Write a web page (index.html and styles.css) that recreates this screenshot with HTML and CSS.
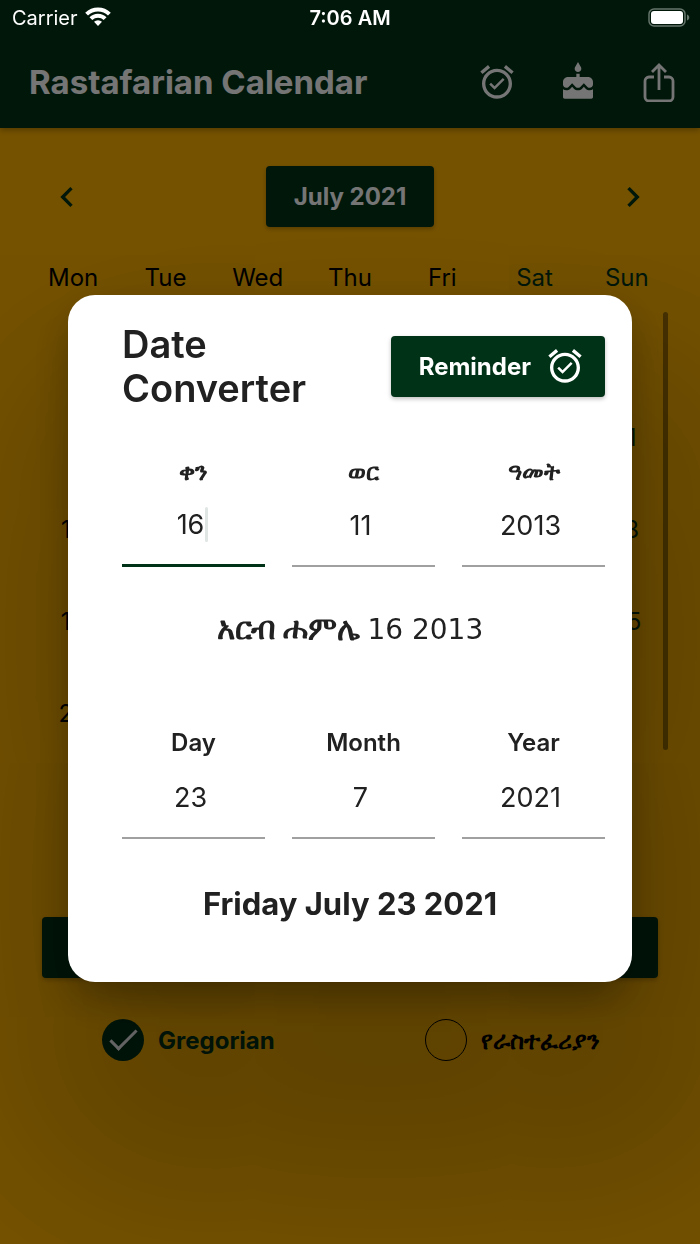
FILE: index.html
```html
<!DOCTYPE html>
<html lang="en">
<head>
<meta charset="utf-8">
<meta name="viewport" content="width=device-width, initial-scale=1">
<title>Rastafarian Calendar</title>
<link rel="stylesheet" href="styles.css">
</head>
<body>
<svg class="defs" aria-hidden="true">
  <symbol id="alarm" viewBox="0 0 24 24"><path fill="currentColor" d="M22 5.72l-4.6-3.86-1.29 1.53 4.6 3.86L22 5.72zM7.88 3.39L6.6 1.86 2 5.71l1.29 1.53 4.59-3.85zM12 4c-4.97 0-9 4.03-9 9s4.02 9 9 9c4.97 0 9-4.03 9-9s-4.03-9-9-9zm0 16c-3.87 0-7-3.13-7-7s3.13-7 7-7 7 3.13 7 7-3.13 7-7 7zm-1.46-5.47L8.41 12.4l-1.06 1.06 3.18 3.18 6-6-1.06-1.06-4.93 4.95z"/></symbol>
</svg>

<div class="status">
  <div class="carrier"><span>Carrier</span>
    <svg class="wifi" viewBox="0 0 26 19" fill="none" stroke="#fff" stroke-width="4"><path d="M1.600 7.200a16.200 16.200 0 0 1 22.800 0M5.900 11.600a10 10 0 0 1 14.200 0"/><path fill="#fff" stroke="none" d="M13 19l-4-4.200a5.700 5.700 0 0 1 8 0z"/></svg>
  </div>
  <div class="clock">7:06 AM</div>
  <svg class="battery" viewBox="0 0 42 20"><rect x="1" y="1" width="36" height="17" rx="5" fill="none" stroke="#66756c" stroke-width="1.500"/><rect x="3" y="3" width="32" height="13" rx="3" fill="#fff"/><path d="M39 6.500c3 1 3 5 0 6z" fill="#66756c"/></svg>
</div>

<div class="app">
  <header class="bar">
    <h1>Rastafarian Calendar</h1>
    <button class="icon" aria-label="Reminders"><svg width="40" height="40"><use href="#alarm"/></svg></button>
    <button class="icon" aria-label="Birthdays"><svg width="40" height="40" viewBox="0 0 24 24" fill="currentColor"><path d="M12 6c1.110 0 2-.9 2-2 0-.38-.1-.73-.29-1.030L12 0l-1.710 2.970c-.19.3-.29.650-.29 1.030 0 1.100.9 2 2 2zm4.600 9.990l-1.070-1.070-1.080 1.070c-1.300 1.300-3.580 1.310-4.890 0l-1.070-1.070-1.090 1.070C6.750 16.640 5.880 17 4.960 17c-.73 0-1.400-.23-1.960-.61V21c0 .55.450 1 1 1h16c.55 0 1-.450 1-1v-4.610c-.56.38-1.230.61-1.960.61-.92 0-1.790-.36-2.440-1.010zM18 9h-5V7h-2v2H6c-1.660 0-3 1.340-3 3v1.540c0 1.080.88 1.960 1.960 1.960.52 0 1.020-.2 1.380-.57l2.140-2.130 2.130 2.130c.74.740 2.030.740 2.770 0l2.140-2.130 2.130 2.130c.37.370.860.570 1.380.570 1.080 0 1.960-.88 1.960-1.960V12C21 10.340 19.660 9 18 9z"/></svg></button>
    <button class="icon" aria-label="Share"><svg width="40" height="40" viewBox="0 -1 40 40" fill="none" stroke="currentColor" stroke-width="2.800"><path d="M15 14H10a4 4 0 0 0-4 4v16a4 4 0 0 0 4 4h20a4 4 0 0 0 4-4V18a4 4 0 0 0-4-4h-5M20 27V3M13 9l7-7 7 7"/></svg></button>
  </header>

  <main class="calendar">
    <div class="nav">
      <button class="arrow" aria-label="Previous month"><svg width="40" height="40" viewBox="0 0 24 24" fill="currentColor"><path d="M15.410 7.410L14 6l-6 6 6 6 1.410-1.410L10.830 12z"/></svg></button>
      <button class="btn">July 2021</button>
      <button class="arrow" aria-label="Next month"><svg width="40" height="40" viewBox="0 0 24 24" fill="currentColor"><path d="M10 6L8.590 7.410 13.170 12l-4.580 4.590L10 18l6-6z"/></svg></button>
    </div>
    <div class="month">
      <table>
        <thead><tr><th>Mon</th><th>Tue</th><th>Wed</th><th>Thu</th><th>Fri</th><th class="end">Sat</th><th class="end">Sun</th></tr></thead>
        <tbody>
          <tr><td></td><td></td><td></td><td></td><td></td><td></td><td></td></tr>
          <tr><td></td><td></td><td></td><td></td><td></td><td></td><td class="end">11</td></tr>
          <tr><td>12</td><td></td><td></td><td></td><td></td><td></td><td class="end">18</td></tr>
          <tr><td>19</td><td></td><td></td><td></td><td></td><td></td><td class="end">25</td></tr>
          <tr><td>26</td><td></td><td></td><td></td><td></td><td></td><td></td></tr>
        </tbody>
      </table>
      <div class="thumb"></div>
    </div>
    <button class="btn wide" aria-label="Open date converter"></button>
    <div class="modes">
      <label class="mode chosen"><input type="radio" name="mode" checked>Gregorian</label>
      <label class="mode" lang="am"><input type="radio" name="mode">የራስተፈሪያን</label>
    </div>
  </main>
</div>

<div class="scrim">
  <section class="dialog" role="dialog" aria-labelledby="dialog-title">
    <div class="head">
      <h2 id="dialog-title">Date Converter</h2>
      <button class="btn">Reminder<svg width="40" height="40"><use href="#alarm"/></svg></button>
    </div>
    <div class="fields">
      <label class="field am active" lang="am"><span>ቀን</span><input value="16" inputmode="numeric"><i class="caret"></i></label>
      <label class="field am" lang="am"><span>ወር</span><input value="11" inputmode="numeric"></label>
      <label class="field am" lang="am"><span>ዓመት</span><input value="2013" inputmode="numeric"></label>
    </div>
    <p class="result am" lang="am">አርብ ሐምሌ <span class="digits">16 2013</span></p>
    <div class="fields">
      <label class="field"><span>Day</span><input value="23" inputmode="numeric"></label>
      <label class="field"><span>Month</span><input value="7" inputmode="numeric"></label>
      <label class="field"><span>Year</span><input value="2021" inputmode="numeric"></label>
    </div>
    <p class="result">Friday July 23 2021</p>
  </section>
</div>
</body>
</html>
```
FILE: styles.css
```css
* { box-sizing: border-box; }
:root { --green: #003217; --ink: #212121; }
body {
  margin: 0;
  min-height: 100vh;
  background: #ffb300;
  color: #000;
  font-family: Inter, "Noto Sans", sans-serif;
  font-size: 24px;
}
button, input { font: inherit; color: inherit; border: 0; background: none; padding: 0; margin: 0; }
h1, h2, p { margin: 0; }
.defs { position: absolute; width: 0; height: 0; }

.status {
  position: fixed;
  inset: 0 0 auto 0;
  z-index: 3;
  display: grid;
  grid-template-columns: 1fr auto 1fr;
  align-items: center;
  height: 36px;
  padding: 0 10px;
  color: #fff;
  font-size: 20px;
}
.carrier { display: flex; align-items: center; gap: 7px; padding-left: 2px; }
.wifi { width: 26px; height: 19px; margin-bottom: 3px; }
.clock { font-weight: 600; }
.battery { width: 42px; height: 20px; justify-self: end; }

.bar {
  display: flex;
  align-items: center;
  gap: 41px;
  padding: 62px 21px 26px 29px;
  background: var(--green);
  color: #fff;
  box-shadow: 0 2px 6px rgba(0, 0, 0, .3);
}
.bar h1 { flex: 1; font-size: 33px; line-height: 40px; font-weight: 700; white-space: nowrap; }
.icon, .arrow { display: flex; }
.arrow { color: var(--green); }

.calendar { padding: 38px 27px; }
.nav { display: flex; justify-content: space-between; align-items: center; padding: 0 20px; }
.btn {
  display: flex;
  align-items: center;
  gap: 14px;
  height: 61px;
  padding: 0 28px;
  border-radius: 4px;
  background: var(--green);
  color: #fff;
  font-weight: 700;
  box-shadow: 0 2px 4px rgba(0, 0, 0, .25);
}
.month { position: relative; margin-top: 34px; }
table { width: 100%; table-layout: fixed; border-collapse: collapse; text-align: center; }
th { height: 32px; padding: 0; font-weight: 400; }
td { height: 92px; padding: 0; }
tbody tr:first-child td { height: 98px; }
.end { color: var(--green); }
.thumb {
  position: absolute;
  top: 51px;
  right: 5px;
  width: 5px;
  height: 438px;
  border-radius: 3px;
  background: rgba(0, 0, 0, .4);
}
.wide { width: calc(100% - 30px); margin: 158px 15px 0; }
.modes { display: grid; grid-template-columns: 1fr 1fr; margin-top: 41px; }
.mode { display: flex; align-items: center; gap: 14px; padding-left: 75px; font-weight: 600; white-space: nowrap; }
.mode input { appearance: none; width: 42px; height: 42px; border: 1px solid #000; border-radius: 50%; }
.chosen { color: var(--green); font-weight: 700; }
.chosen input { display: grid; place-items: center; border: 0; background: var(--green); }
.chosen input::before {
  content: "";
  width: 24px;
  height: 10px;
  margin-bottom: 7px;
  border: solid #fff;
  border-width: 0 0 3px 3px;
  transform: rotate(-45deg);
}

.scrim {
  position: fixed;
  inset: 0;
  z-index: 2;
  display: flex;
  align-items: center;
  padding: 33px 68px 0;
  background: rgba(0, 0, 0, .54);
}
.dialog {
  flex: 1;
  padding: 27px 0 58px;
  border-radius: 27px;
  background: #fff;
  color: var(--ink);
  box-shadow: 0 18px 44px -6px rgba(0, 0, 0, .36), 30px 130px 200px 70px rgba(0, 0, 0, .22);
}
.head { display: flex; justify-content: space-between; align-items: center; padding: 0 27px 0 54px; }
.head h2 { width: min-content; font-size: 38px; line-height: 44px; font-weight: 600; }
.head .btn { padding-right: 20px; }
.fields { display: grid; grid-template-columns: repeat(3, 1fr); gap: 27px; padding: 0 27px 0 54px; margin-top: 44px; }
.field { position: relative; display: flex; flex-direction: column; text-align: center; }
.field span { line-height: 38px; font-weight: 600; }
.field.am span { line-height: 36px; }
.field input {
  width: 100%;
  height: 77px;
  padding: 0 6px 5px 0;
  border-bottom: 2px solid #a0a0a0;
  font-family: Inter, sans-serif;
  font-size: 27px;
  text-align: center;
  outline: 0;
}
.active input { border-bottom: 3px solid var(--green); }
.caret { position: absolute; left: calc(50% + 11px); top: 53px; width: 3px; height: 35px; border-radius: 2px; background: #e0e6e3; }
.result { margin-top: 45px; text-align: center; font-size: 31px; line-height: 40px; font-weight: 700; }
.result.am { margin-top: 41px; }
.digits { font-family: "DejaVu Sans", sans-serif; font-size: 28px; font-weight: 400; }
.result + .fields { margin-top: 74px; }
```
